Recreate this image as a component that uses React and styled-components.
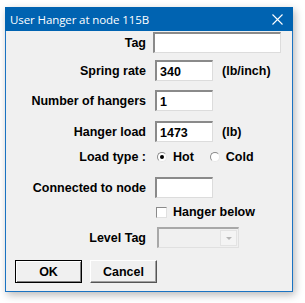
import styled, { createGlobalStyle } from "styled-components";

const GlobalStyle = createGlobalStyle`
  html, body {
    margin: 0;
    padding: 0;
    background: #ffffff;
  }
  body {
    font-family: "Liberation Sans", Arial, sans-serif;
  }
`;

const Page = styled.div`
  width: 305px;
  height: 303px;
  padding: 7px 0 0 5px;
  box-sizing: border-box;
  overflow: hidden;
`;

const Window = styled.div`
  width: 288px;
  height: 285px;
  box-sizing: border-box;
  background: #f0f0f0;
  border: 1px solid #1a73c2;
  border-top: none;
  box-shadow: 2px 3px 8px rgba(0, 0, 0, 0.28);
  display: flex;
  flex-direction: column;
`;

const TitleBar = styled.div`
  height: 24px;
  margin: 0 -1px;
  background: #0063b1;
  color: #ffffff;
  display: flex;
  align-items: center;
  justify-content: space-between;
  padding: 0 10px 0 5px;
  font-family: "Open Sans", "Noto Sans", sans-serif;
  font-size: 11.5px;
  flex-shrink: 0;
`;

const Title = styled.span`
  padding-top: 1px;
  letter-spacing: -0.1px;
`;

const Close = styled.svg`
  width: 11px;
  height: 11px;
`;

const Body = styled.div`
  display: flex;
  flex-direction: column;
  font-weight: bold;
  font-size: 12.5px;
  color: #000000;
`;

const Row = styled.div`
  display: flex;
  align-items: center;
  height: ${(p) => p.$h}px;
  margin-top: ${(p) => p.$top}px;
`;

const Label = styled.div`
  width: 140px;
  text-align: right;
  flex-shrink: 0;
`;

const Field = styled.div`
  display: flex;
  align-items: center;
  margin-left: ${(p) => p.$x}px;
`;

const TextBox = styled.div`
  width: ${(p) => p.$w}px;
  height: 21px;
  box-sizing: border-box;
  background: #ffffff;
  border-top: 2px solid #8a8a8a;
  border-left: 2px solid #8a8a8a;
  border-right: 1px solid #dcdcdc;
  border-bottom: 1px solid #dcdcdc;
  padding: 1px 0 0 3px;
  display: flex;
  align-items: center;
`;

const Unit = styled.span`
  margin-left: 9px;
`;

const RadioCircle = styled.span`
  width: 10px;
  height: 10px;
  border-radius: 50%;
  box-sizing: border-box;
  background: #ffffff;
  border: 1px solid;
  border-color: #8a8a8a #e8e8e8 #e8e8e8 #8a8a8a;
  display: flex;
  align-items: center;
  justify-content: center;
  margin-right: 6px;
  &::after {
    content: "";
    width: 4px;
    height: 4px;
    border-radius: 50%;
    background: ${(p) => (p.$on ? "#000" : "transparent")};
  }
`;

const Option = styled.label`
  display: flex;
  align-items: center;
  margin-right: ${(p) => p.$gap || 0}px;
`;

const CheckSquare = styled.span`
  width: 11px;
  height: 11px;
  box-sizing: border-box;
  background: #ffffff;
  border: 1px solid;
  border-color: #8a8a8a #e0e0e0 #e0e0e0 #8a8a8a;
  margin-right: 6px;
`;

const Combo = styled.div`
  width: 82px;
  height: 21px;
  box-sizing: border-box;
  background: #f0f0f0;
  border-top: 2px solid #a8a8a8;
  border-left: 2px solid #a8a8a8;
  border-right: 1px solid #e0e0e0;
  border-bottom: 1px solid #e0e0e0;
  display: flex;
  justify-content: flex-end;
  padding: 1px;
`;

const ComboButton = styled.div`
  width: 15px;
  border: 1px solid #e3e3e3;
  background: #f4f4f4;
  display: flex;
  align-items: center;
  justify-content: center;
  &::after {
    content: "";
    border-left: 3px solid transparent;
    border-right: 3px solid transparent;
    border-top: 3px solid #b5b5b5;
  }
`;

const Buttons = styled.div`
  display: flex;
  gap: 8px;
  margin: 12px 0 0 9px;
`;

const Button = styled.div`
  width: 67px;
  height: 23px;
  box-sizing: border-box;
  display: flex;
  align-items: center;
  justify-content: center;
  background: #f0f0f0;
  border: 1px solid;
  border-color: ${(p) =>
    p.$default ? "#000 #000 #000 #000" : "#ffffff #555 #555 #ffffff"};
  box-shadow: ${(p) =>
    p.$default
      ? "inset 1px 1px 0 #fff, inset -1px -1px 0 #808080"
      : "inset -1px -1px 0 #a0a0a0"};
  padding-top: 1px;
`;

export default function App() {
  return (
    <Page>
      <GlobalStyle />
      <Window>
        <TitleBar>
          <Title>User Hanger at node 115B</Title>
          <Close viewBox="0 0 11 11">
            <path d="M0.5 0.5 L10.5 10.5 M10.5 0.5 L0.5 10.5" stroke="#fff" strokeWidth="1.1" fill="none" />
          </Close>
        </TitleBar>
        <Body>
          <Row $h={21} $top={1}>
            <Label>Tag</Label>
            <Field $x={7}>
              <TextBox $w={128} />
            </Field>
          </Row>
          <Row $h={21} $top={7}>
            <Label>Spring rate</Label>
            <Field $x={9}>
              <TextBox $w={58}>340</TextBox>
              <Unit>(lb/inch)</Unit>
            </Field>
          </Row>
          <Row $h={21} $top={9}>
            <Label>Number of hangers</Label>
            <Field $x={9}>
              <TextBox $w={58}>1</TextBox>
            </Field>
          </Row>
          <Row $h={21} $top={10}>
            <Label>Hanger load</Label>
            <Field $x={9}>
              <TextBox $w={58}>1473</TextBox>
              <Unit>(lb)</Unit>
            </Field>
          </Row>
          <Row $h={16} $top={7}>
            <Label>Load type :</Label>
            <Field $x={11}>
              <Option $gap={16}>
                <RadioCircle $on />
                Hot
              </Option>
              <Option>
                <RadioCircle />
                Cold
              </Option>
            </Field>
          </Row>
          <Row $h={21} $top={12}>
            <Label>Connected to node</Label>
            <Field $x={9}>
              <TextBox $w={58} />
            </Field>
          </Row>
          <Row $h={14} $top={7}>
            <Label />
            <Field $x={10}>
              <Option>
                <CheckSquare />
                Hanger below
              </Option>
            </Field>
          </Row>
          <Row $h={21} $top={8}>
            <Label>Level Tag</Label>
            <Field $x={11}>
              <Combo>
                <ComboButton />
              </Combo>
            </Field>
          </Row>
          <Buttons>
            <Button $default>OK</Button>
            <Button>Cancel</Button>
          </Buttons>
        </Body>
      </Window>
    </Page>
  );
}
